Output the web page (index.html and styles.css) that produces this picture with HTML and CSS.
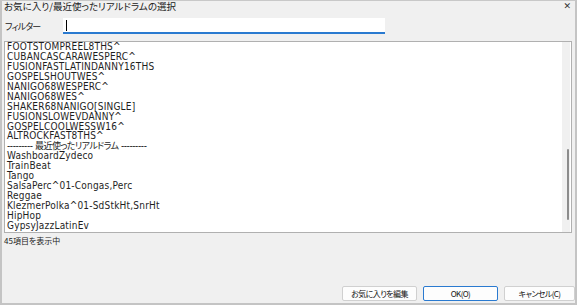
FILE: index.html
```html
<!DOCTYPE html>
<html lang="ja">
<head>
<meta charset="utf-8">
<link rel="stylesheet" href="styles.css">
</head>
<body>
<div class="window">
  <div class="titlebar">
    <span class="title">お気に入り/最近使ったリアルドラムの選択</span>
    <span class="close">✕</span>
  </div>
  <div class="filter-row">
    <span class="filter-label">フィルター</span>
    <div class="filter-input"><span class="caret"></span></div>
  </div>
  <div class="listbox">
    <div class="items">
      <div>FOOTSTOMPREEL8THS^</div>
      <div>CUBANCASCARAWESPERC^</div>
      <div>FUSIONFASTLATINDANNY16THS</div>
      <div>GOSPELSHOUTWES^</div>
      <div>NANIGO68WESPERC^</div>
      <div>NANIGO68WES^</div>
      <div>SHAKER68NANIGO[SINGLE]</div>
      <div>FUSIONSLOWEVDANNY^</div>
      <div>GOSPELCOOLWESSW16^</div>
      <div>ALTROCKFAST8THS^</div>
      <div class="sep">--------- <span class="jp">最近使ったリアルドラム</span> ---------</div>
      <div>WashboardZydeco</div>
      <div>TrainBeat</div>
      <div>Tango</div>
      <div>SalsaPerc^01-Congas,Perc</div>
      <div>Reggae</div>
      <div>KlezmerPolka^01-SdStkHt,SnrHt</div>
      <div>HipHop</div>
      <div>GypsyJazzLatinEv</div>
    </div>
    <div class="scrollbar"><div class="thumb"></div></div>
  </div>
  <div class="status">45項目を表示中</div>
  <div class="buttons">
    <button class="btn">お気に入りを編集</button>
    <button class="btn default">OK(O)</button>
    <button class="btn narrow">キャンセル(C)</button>
  </div>
</div>
</body>
</html>
```
FILE: styles.css
```css
html, body {
  margin: 0;
  padding: 0;
  background: #f0f0f0;
}
.window {
  width: 577px;
  height: 305px;
  box-sizing: border-box;
  border-left: 2px solid #c4c4c4;
  border-right: 2px solid #c4c4c4;
  border-top: 1px solid #c8c8c8;
  border-bottom: 2px solid #c4c4c4;
  background: #f0f0f0;
  display: flex;
  flex-direction: column;
  font-family: "DejaVu Sans", "Noto Sans CJK JP", sans-serif;
  color: #1a1a1a;
  overflow: hidden;
}
.titlebar {
  display: flex;
  justify-content: space-between;
  align-items: center;
  height: 11px;
  padding: 0 4px 0 2px;
}
.title {
  font-family: "Noto Sans CJK JP", sans-serif;
  font-feature-settings: "palt";
  font-size: 9.5px;
  line-height: 11px;
  color: #222;
}
.close {
  font-family: "DejaVu Sans", sans-serif;
  font-size: 9px;
  line-height: 11px;
  color: #333;
}
.filter-row {
  display: flex;
  align-items: center;
  height: 16px;
  margin-top: 6px;
  padding-left: 3px;
}
.filter-label {
  font-family: "Noto Sans CJK JP", sans-serif;
  font-feature-settings: "palt";
  font-size: 9px;
  letter-spacing: -0.8px;
  width: 58px;
  color: #222;
}
.filter-input {
  width: 322px;
  height: 16px;
  box-sizing: border-box;
  background: #fff;
  border-bottom: 2px solid #2a7ad0;
  padding: 2px 0 0 3px;
}
.caret {
  display: block;
  width: 1px;
  height: 11px;
  background: #000;
}
.listbox {
  margin: 7px 3px 0 2px;
  height: 192px;
  box-sizing: border-box;
  border: 1px solid #b0b0b0;
  background: #fff;
  display: flex;
  overflow: hidden;
}
.items {
  flex: 1;
  padding: 0 0 0 2px;
  font-family: "DejaVu Sans", "Noto Sans CJK JP", sans-serif;
  font-stretch: condensed;
  font-size: 10px;
  letter-spacing: 0.2px;
  line-height: 9.94px;
  color: #1e1e1e;
  white-space: nowrap;
}
.items > div {
  height: 9.94px;
}
.sep {
  letter-spacing: -0.4px;
}
.jp {
  font-family: "Noto Sans CJK JP", sans-serif;
  font-feature-settings: "palt";
  font-size: 9px;
  line-height: 9px;
  letter-spacing: -0.6px;
}
.scrollbar {
  width: 8px;
  margin: 0 1px;
  background: #f0f0f0;
  position: relative;
}
.thumb {
  position: absolute;
  left: 5px;
  top: 107px;
  width: 2px;
  height: 71px;
  background: #8c8c8c;
  border-radius: 1px;
}
.status {
  font-family: "Noto Sans CJK JP", sans-serif;
  font-feature-settings: "palt";
  font-size: 8px;
  line-height: 12px;
  margin-top: 2px;
  padding-left: 2px;
  color: #222;
}
.buttons {
  margin-top: auto;
  margin-bottom: 2px;
  display: flex;
  justify-content: flex-end;
  gap: 6px;
}
.btn {
  width: 75px;
  height: 15px;
  box-sizing: border-box;
  border: 1px solid #d0d0d0;
  border-radius: 2px;
  background: #fdfdfd;
  font-family: "Noto Sans CJK JP", sans-serif;
  font-feature-settings: "palt";
  font-size: 8px;
  letter-spacing: -0.6px;
  line-height: 13px;
  padding: 0;
  color: #111;
}
.btn.default {
  border-color: #2a7ad0;
}
.btn.narrow {
  width: 71px;
}
```
